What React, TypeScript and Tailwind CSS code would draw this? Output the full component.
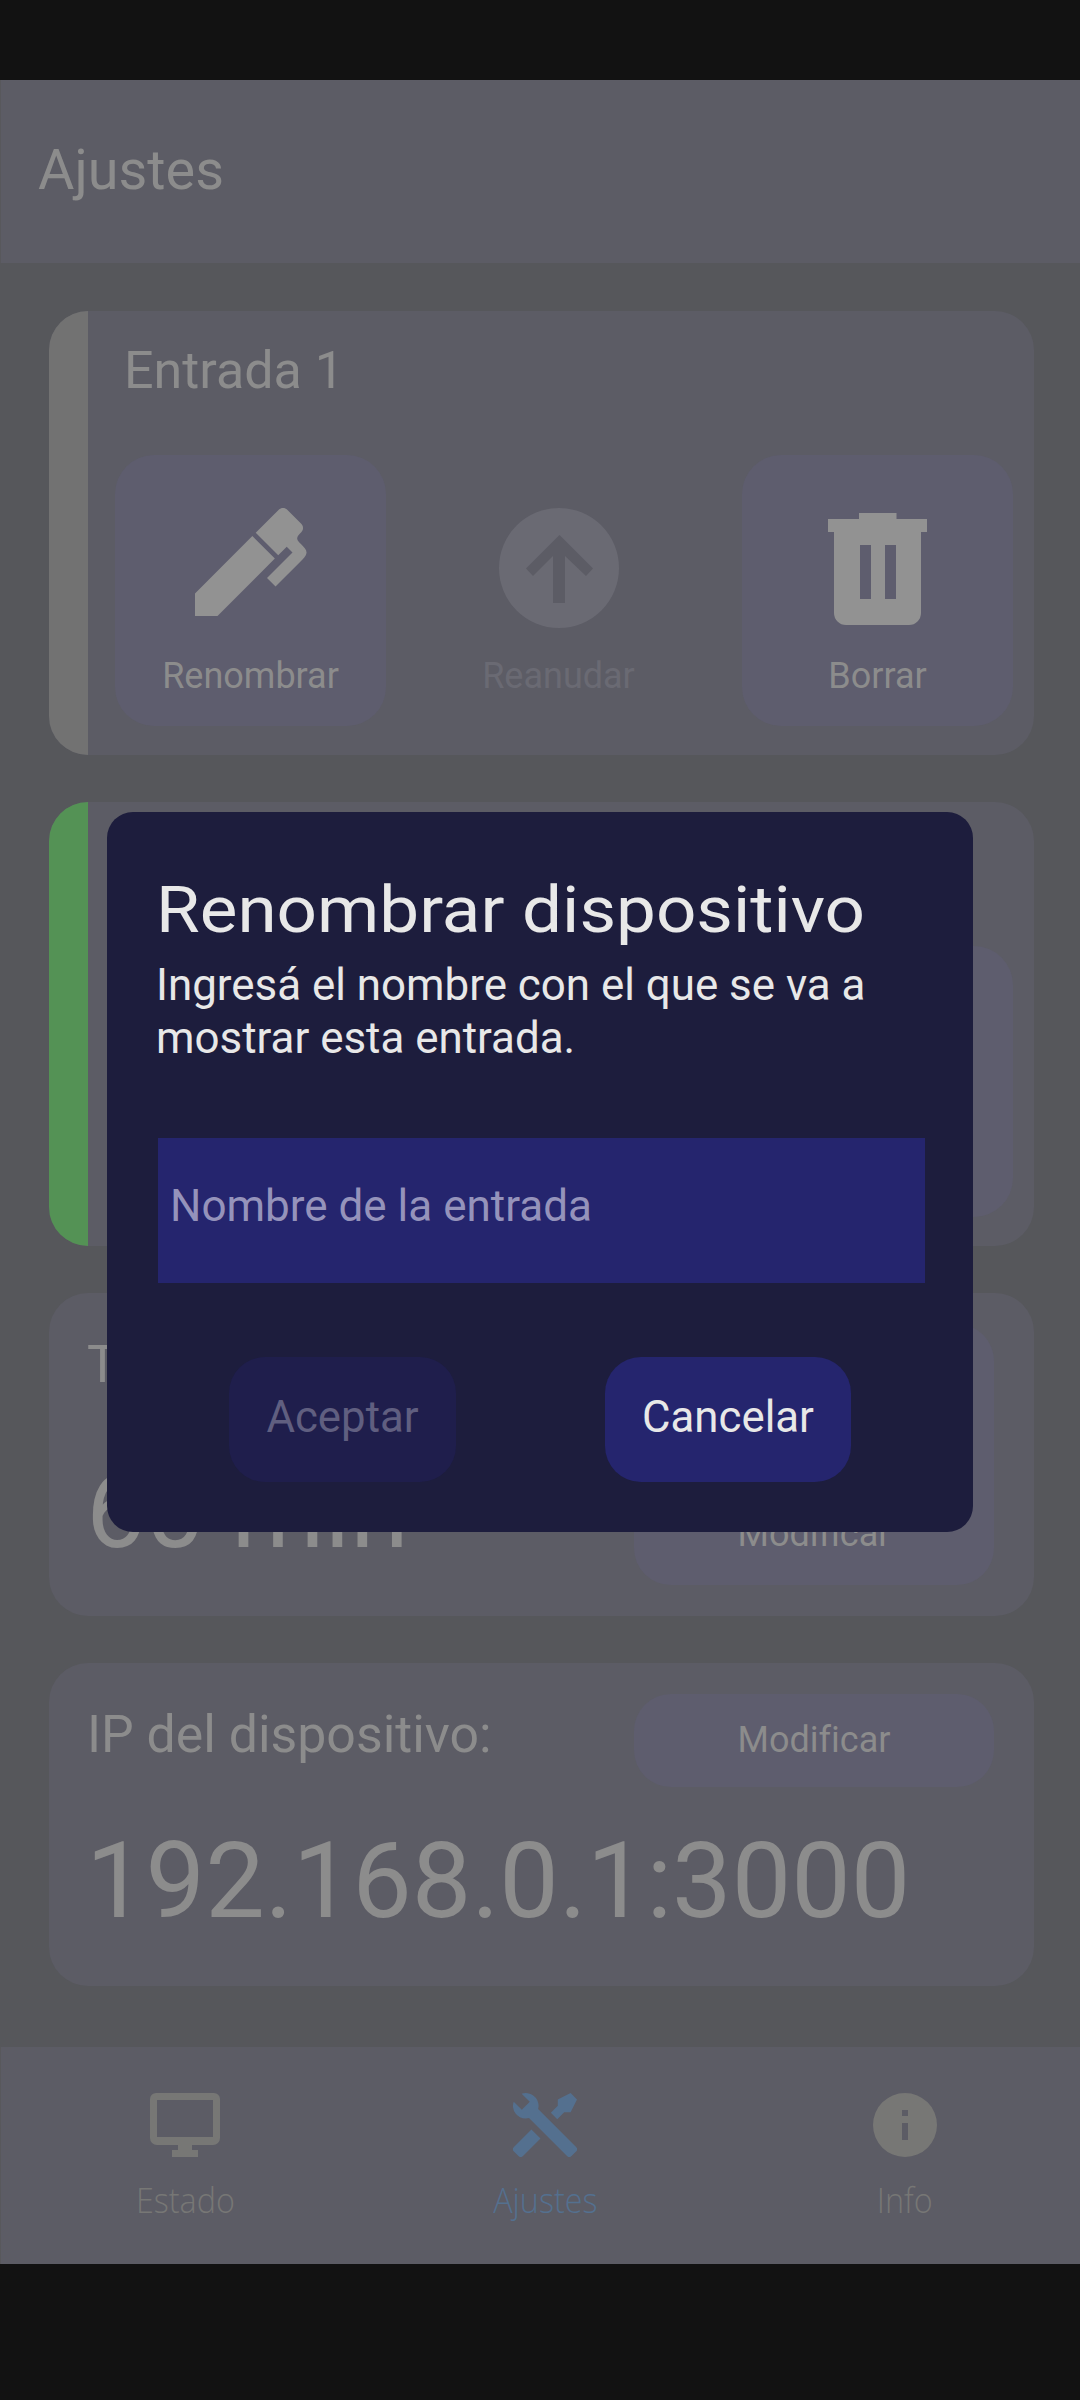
import React from "react";

type IconProps = { className: string };

function PenIcon({ className }: IconProps) {
  return (
    <svg viewBox="0 0 24 24" className={className} fill="currentColor">
      <path d="M20.71,7.04C20.37,7.38 20.04,7.71 20.03,8.04C20,8.36 20.34,8.69 20.66,9C21.14,9.5 21.61,9.95 21.59,10.44C21.57,10.93 21.06,11.44 20.55,11.94L16.42,16.08L15,14.66L19.25,10.42L18.29,9.46L16.87,10.87L13.12,7.12L16.96,3.29C17.35,2.9 18,2.9 18.37,3.29L20.71,5.63C21.1,6 21.1,6.65 20.71,7.04M3,17.25L12.56,7.68L16.31,11.43L6.75,21H3V17.25Z" />
    </svg>
  );
}

function ResumeIcon({ className }: IconProps) {
  return (
    <svg viewBox="0 0 120 120" className={className} fill="currentColor">
      <path
        fillRule="evenodd"
        d="M60 0a60 60 0 1 1 0 120a60 60 0 1 1 0-120ZM54 95H66V48L87 68L94 60.500L60.500 27L27 60.500L34 68L54 48Z"
      />
    </svg>
  );
}

function TrashIcon({ className }: IconProps) {
  return (
    <svg viewBox="0 0 99 112" className={className} fill="currentColor">
      <path
        fillRule="evenodd"
        d="M31 0H68.500V6H99V19H93V100A12 12 0 0 1 81 112H18A12 12 0 0 1 6 100V19H0V6H31ZM32 32V86H43V32ZM57 32V86H68V32Z"
      />
    </svg>
  );
}

function MonitorIcon({ className }: IconProps) {
  return (
    <svg viewBox="0 0 70 64" className={className} fill="currentColor">
      <path
        fillRule="evenodd"
        d="M6 0H64A6 6 0 0 1 70 6V45A7 7 0 0 1 63 52H42V57H48V64H22V57H28V52H7A7 7 0 0 1 0 45V6A6 6 0 0 1 6 0ZM7 7V44H63V7Z"
      />
    </svg>
  );
}

function ToolsIcon({ className }: IconProps) {
  return (
    <svg viewBox="2 2 20 20" className={className} fill="currentColor">
      <path d="M21.71 20.29L20.29 21.71A1 1 0 0 1 18.88 21.71L7 9.85A3.81 3.81 0 0 1 6 10A4 4 0 0 1 2.22 4.7L4.76 7.24L5.29 6.71L6.71 5.29L7.24 4.76L4.7 2.22A4 4 0 0 1 10 6A3.81 3.81 0 0 1 9.85 7L21.71 18.88A1 1 0 0 1 21.71 20.29M2.29 18.88A1 1 0 0 0 2.29 20.29L3.71 21.71A1 1 0 0 0 5.12 21.71L10.59 16.25L7.76 13.42M20 2L16 4V6L13.83 8.17L15.83 10.17L18 8H20L22 4Z" />
    </svg>
  );
}

function InfoIcon({ className }: IconProps) {
  return (
    <svg viewBox="0 0 64 64" className={className} fill="currentColor">
      <path fillRule="evenodd" d="M32 0a32 32 0 1 1 0 64a32 32 0 1 1 0-64ZM29 17V23H35V17ZM29 30V47H35V30Z" />
    </svg>
  );
}

function DeviceCard({ name, stripe }: { name?: string; stripe: string }) {
  return (
    <section className="flex h-[444px] overflow-hidden rounded-[39px] bg-[#5c5c65]">
      <div className={`w-[39px] shrink-0 ${stripe}`} />
      <div className="flex-1 pr-[21px] pl-[27px]">
        <h2 className="mt-[25px] ml-[9px] h-[70px] text-[52px] leading-[70px] text-[#8c8c8c]">{name}</h2>
        <div className="mt-[49px] flex">
          <button className="flex h-[271px] w-[271px] flex-col items-center rounded-[39px] bg-[#5e5d6e]">
            <PenIcon className="mt-[35px] mr-[3px] h-[144px] w-[144px] shrink-0 text-[#929292]" />
            <span className="mt-[21px] text-[36px] leading-[42px] text-[#8c8c8c]">Renombrar</span>
          </button>
          <button className="ml-[37px] flex h-[271px] w-[271px] flex-col items-center text-[#6a6a73]">
            <ResumeIcon className="mt-[53px] h-[120px] w-[120px] shrink-0" />
            <span className="mt-[27px] text-[36px] leading-[42px]">Reanudar</span>
          </button>
          <button className="ml-[48px] flex h-[271px] w-[271px] flex-col items-center rounded-[39px] bg-[#5e5d6e]">
            <TrashIcon className="mt-[58px] h-[112px] w-[99px] shrink-0 text-[#929292]" />
            <span className="mt-[30px] text-[36px] leading-[42px] text-[#8c8c8c]">Borrar</span>
          </button>
        </div>
      </div>
    </section>
  );
}

function ValueCard({ label, value, children }: { label: string; value: string; children: React.ReactNode }) {
  return (
    <section className="flex h-[323px] justify-between rounded-[39px] bg-[#5c5c65] pt-[31px] pr-[40px] pl-[37px] text-[#8c8c8c]">
      <div className="w-0 whitespace-nowrap">
        <p className="mt-[11px] ml-px h-[60px] text-[51.8px] leading-[60px]">{label}</p>
        <p className="mt-[54px] h-[124px] text-[106px] leading-[124px]">{value}</p>
      </div>
      {children}
    </section>
  );
}

function Tab({ label, color, children }: { label: string; color: string; children: React.ReactNode }) {
  return (
    <div className={`flex w-[360px] shrink-0 flex-col items-center pt-[46px] ${color}`}>
      {children}
      <span className="mt-[18px] scale-x-[0.91] font-['Open_Sans',sans-serif] text-[35.5px] leading-[48px] font-[360]">
        {label}
      </span>
    </div>
  );
}

export default function App() {
  return (
    <div className="relative flex h-[2400px] w-[1080px] flex-col overflow-hidden bg-[#56575b] font-['Roboto',sans-serif] [font-variant-ligatures:none]">
      <div className="h-[80px] shrink-0 bg-[#121212]" />
      <header className="flex h-[183px] shrink-0 items-center border-l border-[#58585c] bg-[#5c5c65] pb-[4px] pl-[37px]">
        <h1 className="text-[55.8px] leading-[66px] text-[#8c8c8c]">Ajustes</h1>
      </header>

      <main className="flex flex-1 flex-col gap-[47px] pt-[48px] pr-[46px] pl-[49px]">
        <DeviceCard name="Entrada 1" stripe="bg-[#727272]" />
        <DeviceCard stripe="bg-[#549255]" />
        <ValueCard label="Tiempo:" value="60 min">
          <button className="flex h-[261px] w-[360px] flex-col items-center justify-end rounded-[37px] bg-[#5e5d6e] pb-[30px] text-[36px] leading-[42px]">
            Modificar
          </button>
        </ValueCard>
        <ValueCard label="IP del dispositivo:" value="192.168.0.1:3000">
          <button className="h-[93px] w-[360px] rounded-[37px] bg-[#5e5d6e] pb-px text-[36px] leading-[92px]">Modificar</button>
        </ValueCard>
      </main>

      <nav className="flex h-[217px] shrink-0 border-l border-[#58585c] bg-[#5c5c65] pl-[4px]">
        <Tab label="Estado" color="text-[#777775]">
          <MonitorIcon className="h-[64px] w-[70px]" />
        </Tab>
        <Tab label="Ajustes" color="text-[#54708f]">
          <ToolsIcon className="h-[64px] w-[64px]" />
        </Tab>
        <Tab label="Info" color="text-[#777775]">
          <InfoIcon className="h-[64px] w-[64px]" />
        </Tab>
      </nav>
      <div className="h-[136px] shrink-0 bg-[#121212]" />

      <div
        role="dialog"
        className="absolute top-[812px] left-[107px] flex h-[720px] w-[866px] flex-col rounded-[26px] bg-[#1d1d3d] pr-[48px] pl-[51px] text-[#e8e8e8]"
      >
        <h2 className="mt-[60px] ml-[-2px] h-[76px] origin-left scale-x-[1.092] text-[65px] leading-[76px] whitespace-nowrap">
          Renombrar dispositivo
        </h2>
        <p className="mt-[11px] ml-[-2px] h-[106px] text-[43.9px] leading-[53px] whitespace-nowrap">
          Ingresá el nombre con el que se va a
          <br />
          mostrar esta entrada.
        </p>
        <input
          placeholder="Nombre de la entrada"
          className="mt-[73px] h-[145px] w-[767px] bg-[#25256e] px-[12px] pb-[10px] text-[44px] outline-none placeholder:text-[#9593bb] placeholder:opacity-100"
        />
        <div className="mt-[74px] flex pl-[71px]">
          <button className="h-[125px] w-[227px] rounded-[36px] bg-[#1f1e4c] pb-[4px] text-[43.75px] text-[#605f80]">
            Aceptar
          </button>
          <button className="ml-[149px] h-[125px] w-[246px] rounded-[36px] bg-[#25256e] pb-[4px] text-[43.75px]">
            Cancelar
          </button>
        </div>
      </div>
    </div>
  );
}
